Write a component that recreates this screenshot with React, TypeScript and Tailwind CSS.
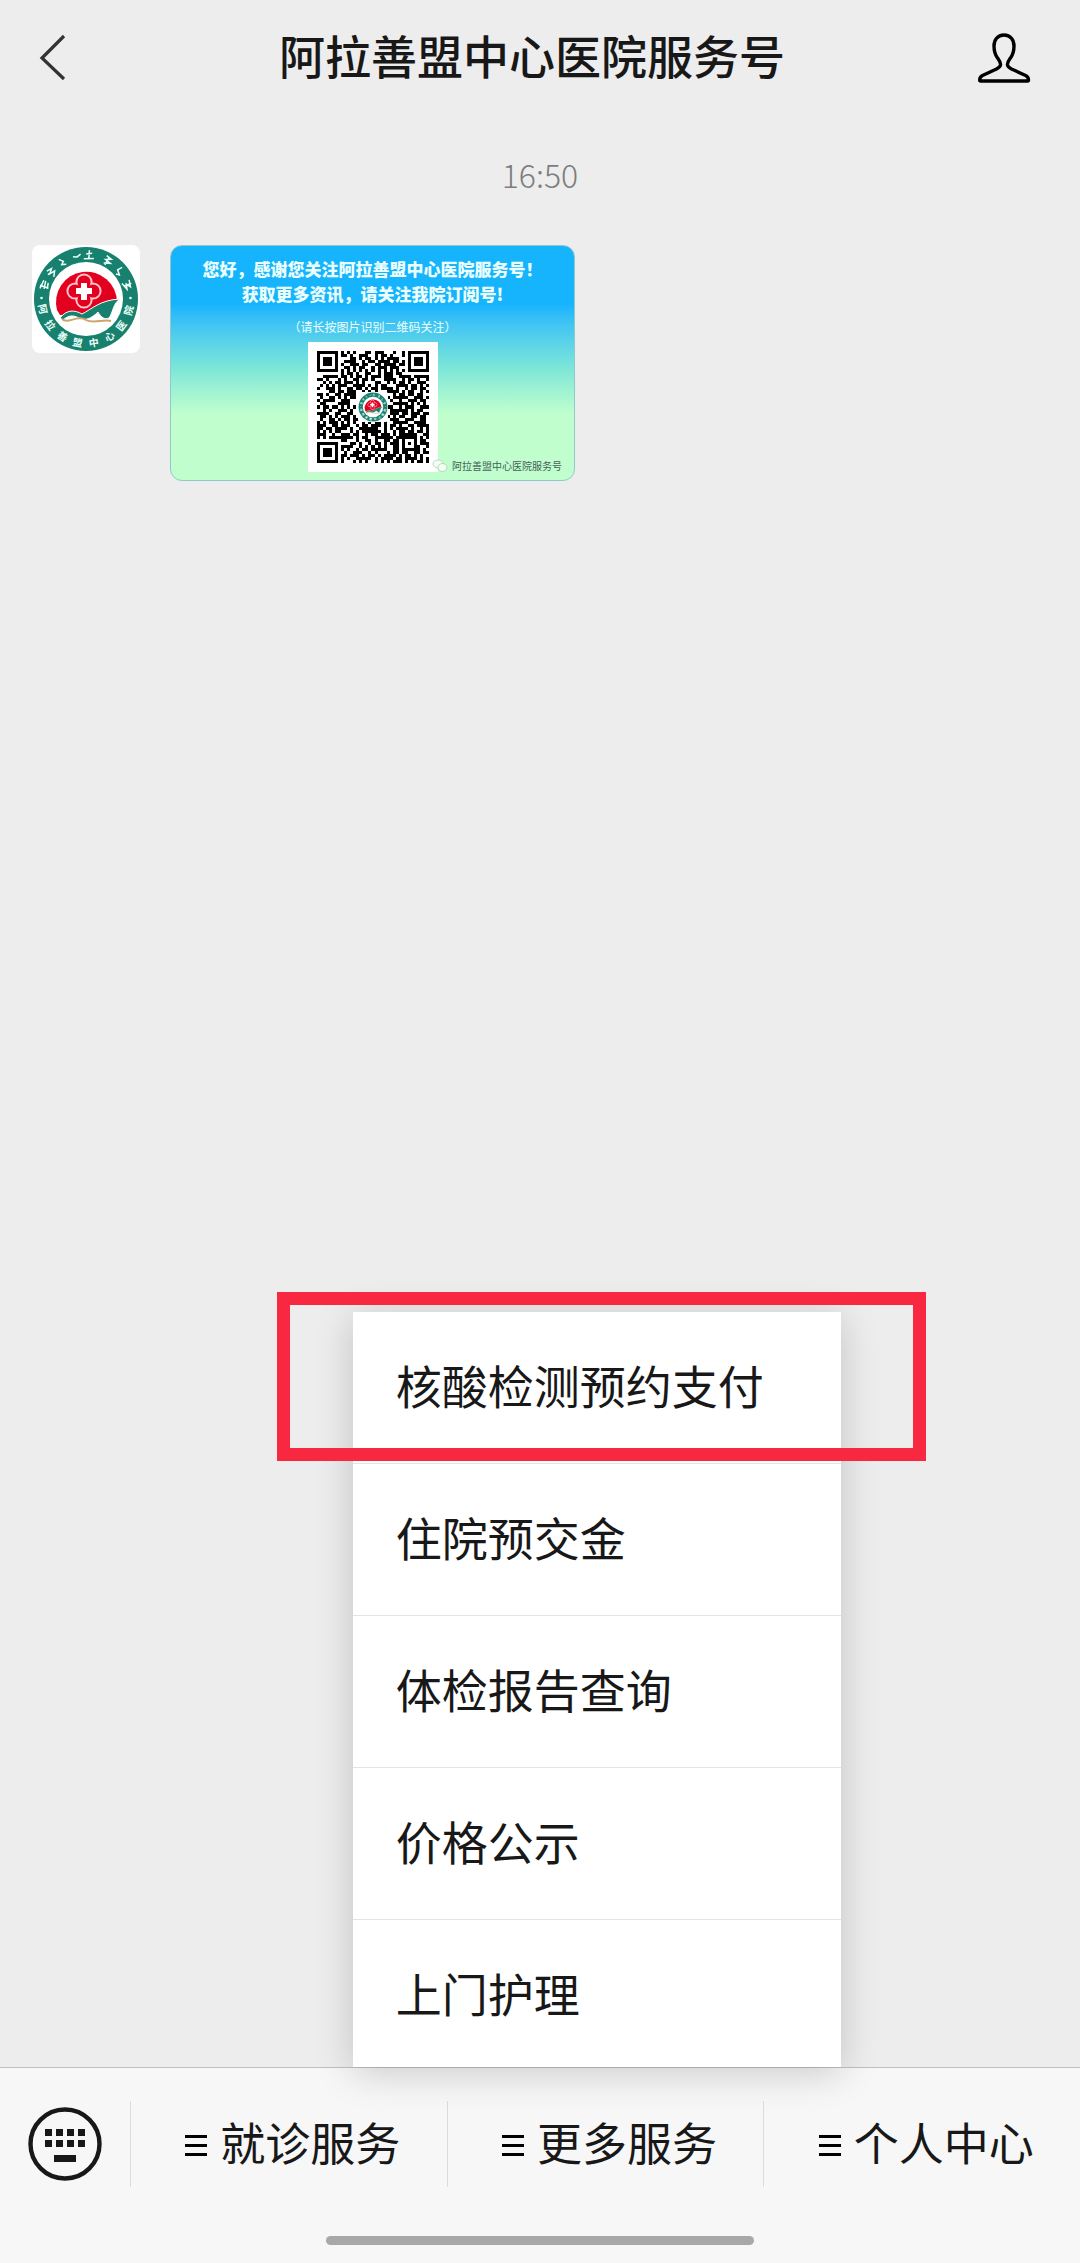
interface MenuColumn {
  label: string;
  items?: string[];
}

const columns: MenuColumn[] = [
  { label: "就诊服务" },
  {
    label: "更多服务",
    items: ["核酸检测预约支付", "住院预交金", "体检报告查询", "价格公示", "上门护理"],
  },
  { label: "个人中心" },
];

const qrRows = [
  "#######.#.#.#...##.###...#..#.#######",
  "#.....#.##.#..###..#.##.#...#.#.....#",
  "#.###.#....##.#.##.#.#.####...#.###.#",
  "#.###.#..####..#.##.####.##.#.#.###.#",
  "#.###.#.#..###.##..##.####.##.#.###.#",
  "#.....#..##.#.##..#.###.###...#.....#",
  "#######.#.#.#.#.#.#.#.#.#.#.#.#######",
  "........#.##.#..##..#.###.##.........",
  "..#####.##.#.##.#.###.###..####.#####",
  "##.#...#.#..##.##.#...####..#.##.#..#",
  "..#.#.##.###.#.#...##..#.#.##.#..###.",
  ".#.#.#.###..####.#.#.##...####.##.#.#",
  "#..###.#..##.##.#.##.####.#..#.##.##.",
  "....##.##.###..#.#.#...####.#.##..#.#",
  "##.#..##.####.........#..#.##.##.##..",
  ".#..##.#.#.##.........##.#####..###.#",
  "#.####..###.............#..#..###.##.",
  ".##....####..............#####.#.#.#.",
  "#.##.##.#.#.#..........##..#.###..###",
  "..#.#..###.#............######.#.##..",
  "####..##..##..........#.###.##.###.##",
  ".##.#.#.###.#.........##.#.##..##.##.",
  ".#..##.#.##.###......#..###..###..##.",
  "#.#.###.#.#.#..#.#.##.#..#####..####.",
  "###..##.###..#.##.###.#.##.#..##.####",
  "##.##.####.#..######..#.#.####.#..#.#",
  "#.#.#.##...#.#.######.#..#.##.##.##.#",
  "###..#..###.##..#.##.###.#.######..##",
  "#.#.########.#.##..######.#######.#.#",
  "........##...#..##.#..##.##.#...#.##.",
  "#######....##.#..#.##.#.###.#.#.#.###",
  "#.....#.####..#.#.#.#.#..##.#...##..#",
  "#.###.#.#.#..#.##.#####..##.######.#.",
  "#.###.#..#..###..#.#...#.##.##..##.##",
  "#.###.#.##.###.#.##.#.####.#.##.#.#..",
  "#.....#.#.#..#####.#.####.##.####.#.#",
  "#######.#...#.#.#..#.#.#.###.#.#.##.#",
];

const qrPath = qrRows
  .map((row, y) =>
    [...row].map((cell, x) => (cell === "#" ? `M${x} ${y}h1v1h-1z` : "")).join("")
  )
  .join("");

// Mongolian lettering along the top half of the seal, degrees from 12 o'clock
const scriptMarks = [
  { angle: -71, d: "M49 7l9 1M50 11l8-1M51 14l6-1M52 6v9" },
  { angle: -51, d: "M51 6l5 2-5 2 5 2-5 3M49 9l3 1" },
  { angle: -31, d: "M51 6l3 4-3 2 4 2" },
  { angle: -12, d: "M50 10l4 1 4-2" },
  { angle: 4, d: "M54 5v8M51 9l6-1M49 14l10-1" },
  { angle: 29, d: "M51 6l6 1-5 3 6 1-6 3M54 6v9" },
  { angle: 50, d: "M53 6l-1 5 5 2-3 2" },
  { angle: 71, d: "M50 7l7 1-4 3 5 1-7 3M54 6v8" },
];

// Chinese lettering along the bottom half, degrees from 6 o'clock
const nameMarks = [
  { angle: 77, char: "阿" },
  { angle: 54, char: "拉" },
  { angle: 32, char: "善" },
  { angle: 11, char: "盟" },
  { angle: -10, char: "中" },
  { angle: -32, char: "心" },
  { angle: -53, char: "医" },
  { angle: -75, char: "院" },
];

function HospitalLogo({ className }: { className: string }) {
  return (
    <svg viewBox="0 0 108 108" className={className} role="img" aria-label="医院标志">
      <rect width="108" height="108" rx="8" fill="#fff" />
      <circle cx="54" cy="54" r="52" fill="#17806e" />
      <circle cx="54" cy="54" r="37" fill="#fff" />
      <g fill="none" stroke="#e9fff8" strokeWidth="1.5">
        {scriptMarks.map(({ angle, d }) => (
          <path key={angle} d={d} transform={`rotate(${angle} 54 54)`} />
        ))}
      </g>
      <g fill="#e9fff8">
        <circle cx="9.500" cy="53" r="1.3" />
        <circle cx="98.500" cy="53" r="1.3" />
      </g>
      <g fill="#e9fff8" fontSize="10" fontWeight="700" textAnchor="middle">
        {nameMarks.map(({ angle, char }) => (
          <text key={char} x="54" y="102" transform={`rotate(${angle} 54 54)`}>
            {char}
          </text>
        ))}
      </g>
      <path d="M25 65a30.500 30.500 0 1 1 60-8L70 68l-42 2z" fill="#e3001f" />
      <g fill="none" stroke="#ffc4cc" strokeWidth="3.200">
        <circle cx="52" cy="37" r="7" />
        <circle cx="43" cy="46" r="7" />
        <circle cx="61" cy="46" r="7" />
        <circle cx="52" cy="55" r="7" />
      </g>
      <g fill="#e3001f">
        <circle cx="52" cy="37" r="6.600" />
        <circle cx="43" cy="46" r="6.600" />
        <circle cx="61" cy="46" r="6.600" />
        <circle cx="52" cy="55" r="6.600" />
      </g>
      <path d="M49 38h6v5h5v6h-5v6h-6v-6h-5v-6h5z" fill="#fff" />
      <path
        d="M28 73c7-9 15-8 22-4 10-5 18-14 38-15-7 4-7 14-11 19-5 2-8-1-11-6-7 7-13 9-19 6-6-3-10-3-16 2z"
        fill="#17806e"
        stroke="#fff"
      />
      <path
        d="M30 74c6 6 15-5 24 1 7 4 18-1 25 1"
        fill="none"
        stroke="#cba56d"
        strokeWidth="2"
      />
    </svg>
  );
}

function WelcomeCard() {
  return (
    <button
      type="button"
      className="relative flex h-[236px] w-[405px] flex-col items-center rounded-xl border border-[#8fc9c8] bg-linear-to-b from-[#16b4fd] from-25% via-[#7be6d8] via-52% to-[#c0ffcd] to-72% pt-[10px] text-[#eaffff]"
    >
      <span className="text-[17px] leading-[25px] font-black whitespace-nowrap">
        您好，感谢您关注阿拉善盟中心医院服务号！
      </span>
      <span className="text-[17px] leading-[25px] font-black whitespace-nowrap">
        获取更多资讯，请关注我院订阅号!
      </span>
      <span className="mt-[11px] text-xs leading-5">（请长按图片识别二维码关注）</span>
      <span className="relative mt-[5px] flex size-[130px] items-center justify-center bg-white">
        <svg viewBox="0 0 37 37" className="size-[112px]" role="img" aria-label="二维码">
          <path d={qrPath} shapeRendering="crispEdges" />
        </svg>
        <HospitalLogo className="absolute size-[30px]" />
      </span>
      <span className="absolute right-3 bottom-1 flex items-center gap-1 text-[10px] leading-5 text-[#45605a]">
        <svg viewBox="0 0 16 14" className="h-[14px] w-4" fill="#f1fff2" stroke="#a8b8aa">
          <ellipse cx="6" cy="5" rx="5" ry="4" strokeWidth="0.6" />
          <ellipse cx="10.500" cy="8.500" rx="4.500" ry="4" strokeWidth="0.6" />
        </svg>
        阿拉善盟中心医院服务号
      </span>
    </button>
  );
}

function SubMenu({ items }: { items: string[] }) {
  return (
    <ul className="absolute bottom-full -left-[94px] mb-px w-[488px] bg-white shadow-[0_6px_36px_rgba(0,0,0,0.18)]">
      {items.map((item, index) => (
        <li key={item} className="group relative border-b border-[#e4e4e4] last:border-b-0">
          <button
            type="button"
            className="flex h-[151px] w-full items-center pb-2 pl-[43px] text-left text-[46px] leading-none font-normal group-last:h-[147px] group-last:pb-1"
          >
            {item}
          </button>
          {index === 0 && (
            <div className="pointer-events-none absolute -top-5 -right-[85px] bottom-[2px] -left-[76px] border-[13px] border-[#f7283f]" />
          )}
        </li>
      ))}
    </ul>
  );
}

export default function App() {
  return (
    <div className="flex min-h-screen flex-col bg-[#ededed] font-['Noto_Sans_CJK_SC',sans-serif] text-[#181818]">
      <header className="flex h-[122px] items-start justify-between border-b border-[#ebebeb] px-8">
        <button type="button" aria-label="返回" className="mt-[33px] h-12 w-[54px]">
          <svg viewBox="0 0 54 48" fill="none" stroke="#333" strokeWidth="3.200">
            <path d="M32 3L10 25l22 21" />
          </svg>
        </button>
        <h1 className="mt-[22px] text-[46px] leading-[64px] font-medium">
          阿拉善盟中心医院服务号
        </h1>
        <button type="button" aria-label="账号资料" className="mt-8 mr-4 h-[52px] w-[54px]">
          <svg
            viewBox="0 0 54 52"
            fill="none"
            stroke="#000"
            strokeWidth="3.400"
            strokeLinejoin="round"
          >
            <path d="M26 3c-6.500 0-10 5-10 11 0 5 1 8.500 3.500 12 2 2.800 3.500 4.500 3 7-.3 1.700-2 3-4 4L4.500 43.500C2.500 44.500 1.700 46 1.700 48c0 .7.400 1 1 1h46.800c.6 0 1-.3 1-1 0-2-.9-3.500-2.900-4.500L33.500 37c-2-1-3.700-2.300-4-4-.5-2.500 1-4.200 3-7C35 22.500 36 19 36 14c0-6-3.500-11-10-11z" />
          </svg>
        </button>
      </header>

      <main className="flex-1 px-8">
        <time className="mt-[30px] block text-center text-[32px] leading-[44px] font-light text-[#7d7d7d]">
          16:50
        </time>
        <div className="mt-[49px] flex gap-[30px]">
          <HospitalLogo className="size-[108px]" />
          <WelcomeCard />
        </div>
      </main>

      <footer className="border-t border-[#c0c0c0] bg-[#f7f7f7]">
        <nav className="flex h-[151px] items-center">
          <button
            type="button"
            aria-label="切换键盘"
            className="flex w-[130px] items-center justify-center"
          >
            <svg viewBox="0 0 74 74" className="size-[74px]" fill="#181818">
              <circle cx="37" cy="37" r="34.500" fill="none" stroke="#181818" strokeWidth="4.400" />
              <path d="M17 22h7v7h-7zM28 22h7v7h-7zM39 22h7v7h-7zM50 22h7v7h-7zM17 33h7v7h-7zM28 33h7v7h-7zM39 33h7v7h-7zM50 33h7v7h-7zM26 48h22v7H26z" />
            </svg>
          </button>
          {columns.map((column) => (
            <div
              key={column.label}
              className="relative flex h-full flex-1 items-center before:h-[86px] before:w-px before:bg-[#dcdcdc]"
            >
              <button
                type="button"
                className="flex flex-1 items-center justify-center gap-[13px] pl-2 text-[45px] leading-none font-normal"
              >
                <svg viewBox="0 0 22 22" className="mt-1 size-[22px]">
                  <path d="M0 0h22v3H0zM0 9h22v3H0zM0 18h22v3H0z" />
                </svg>
                <span className="pb-1">{column.label}</span>
              </button>
              {column.items && <SubMenu items={column.items} />}
            </div>
          ))}
        </nav>
        <div className="mx-auto mt-[17px] mb-[18px] h-[9px] w-[428px] rounded-full bg-[#a8a8a8]" />
      </footer>
    </div>
  );
}
